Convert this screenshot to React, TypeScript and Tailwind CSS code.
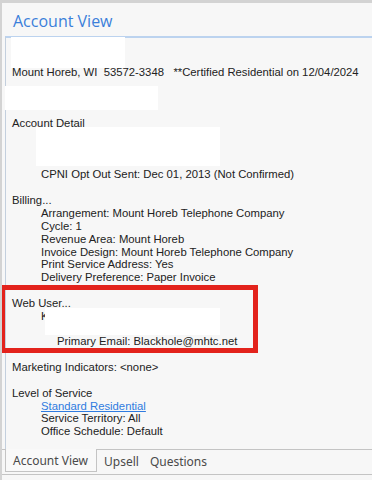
import { type FC, type ReactNode } from 'react';

type Row = { text?: ReactNode; indent?: 0 | 1 | 2 };

const indentClass = ['pl-[6px]', 'pl-[35px]', 'pl-[51px]'];

// one entry per 12.85px text row, blank rows keep the spacing of the original form
const rows: Row[] = [
  {},
  {},
  { text: 'Mount Horeb, WI  53572-3348   **Certified Residential on 12/04/2024' },
  {},
  {},
  {},
  { text: 'Account Detail' },
  {},
  {},
  {},
  { text: 'CPNI Opt Out Sent: Dec 01, 2013 (Not Confirmed)', indent: 1 },
  {},
  { text: 'Billing...' },
  { text: 'Arrangement: Mount Horeb Telephone Company', indent: 1 },
  { text: 'Cycle: 1', indent: 1 },
  { text: 'Revenue Area: Mount Horeb', indent: 1 },
  { text: 'Invoice Design: Mount Horeb Telephone Company', indent: 1 },
  { text: 'Print Service Address: Yes', indent: 1 },
  { text: 'Delivery Preference: Paper Invoice', indent: 1 },
  {},
  { text: 'Web User...' },
  { text: 'K', indent: 1 },
  {},
  { text: 'Primary Email: Blackhole@mhtc.net', indent: 2 },
  {},
  { text: 'Marketing Indicators: <none>' },
  {},
  { text: 'Level of Service' },
  {
    text: <span className="text-[#2f7be0] underline underline-offset-[1px]">Standard Residential</span>,
    indent: 1,
  },
  { text: 'Service Territory: All', indent: 1 },
  { text: 'Office Schedule: Default', indent: 1 },
];

const Redaction: FC<{ className: string }> = ({ className }) => (
  <div className={`absolute bg-white ${className}`} />
);

export default function App() {
  return (
    <div className="relative w-[372px] h-[480px] overflow-hidden bg-[#f7f7f7] border-t-[3px] border-l-2 border-[#d3d3d3] font-['Liberation_Sans',Arial,sans-serif]">
      {/* Header */}
      <div className="h-[33px] pl-[11px] pt-[7px] text-[16px] leading-[22px] text-[#3b7fda] font-['Open_Sans','Noto_Sans',sans-serif]">
        Account View
      </div>

      {/* Detail panel */}
      <div className="ml-[3px] h-[413px] border-t-2 border-t-[#bcd3ef] border-l border-l-[#c3cfdd] pt-[2px] text-[11.3px] leading-[12.85px] text-[#222]">
        {rows.map((row, i) => (
          <div key={i} className={`whitespace-pre h-[12.85px] ${indentClass[row.indent ?? 0]}`}>
            {row.text ?? '\u00a0'}
          </div>
        ))}
      </div>

      {/* Tab strip */}
      <div className="flex h-[26px] border-b border-[#c4c4c4] font-['Noto_Sans','Open_Sans',sans-serif] text-[12px] text-[#4a4a4a]">
        <div className="w-[3px] border-t border-[#c4c4c4]" />
        <div className="w-[92px] h-[23px] border-l border-r border-b border-[#c4c4c4] bg-[#f9f9f9] flex items-center pl-[7px] pt-[2px]">
          Account View
        </div>
        <div className="flex-1 border-t border-[#c4c4c4] flex items-center gap-[11px] pl-[7px]">
          <span>Upsell</span>
          <span>Questions</span>
        </div>
      </div>

      {/* Redactions and highlight lying over the form */}
      <Redaction className="left-[9px] top-[34px] w-[114px] h-[31px]" />
      <Redaction className="left-[3px] top-[83px] w-[153px] h-[24px]" />
      <Redaction className="left-[34px] top-[124px] w-[184px] h-[39px]" />
      <Redaction className="left-[43px] top-[305px] w-[175px] h-[27px]" />
      <div className="absolute left-[-2px] top-[282px] w-[258px] h-[68px] border-[5px] border-[#e3231c]" />
    </div>
  );
}
